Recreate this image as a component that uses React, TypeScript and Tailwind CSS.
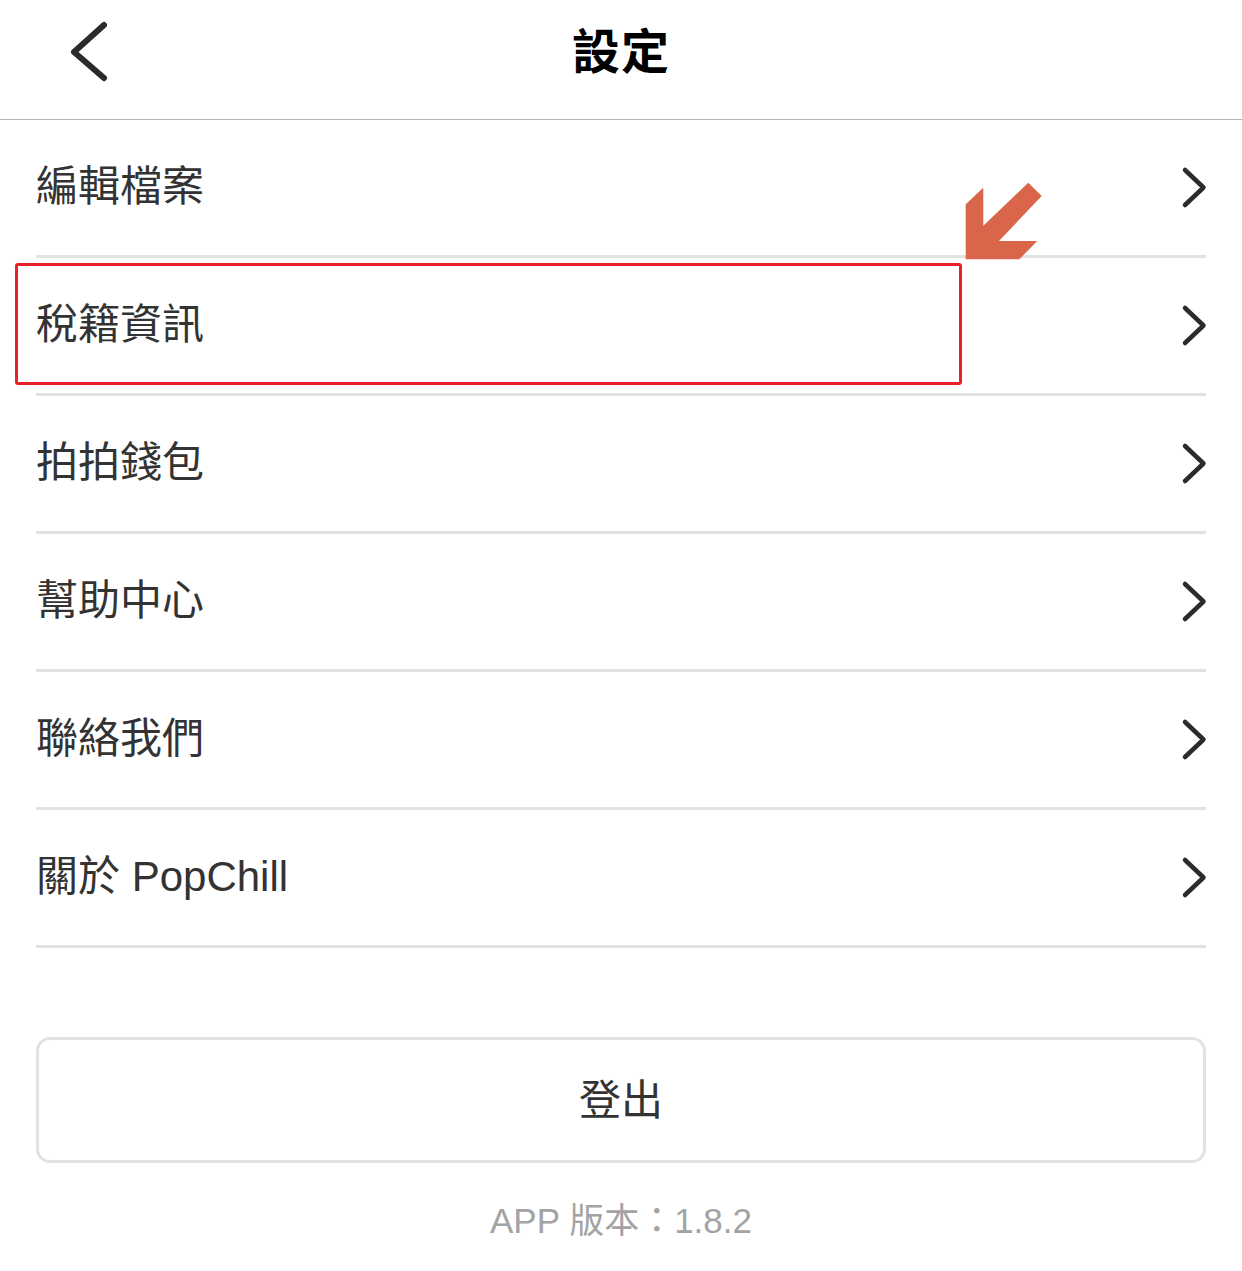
import React from "react";

const items = ["編輯檔案", "稅籍資訊", "拍拍錢包", "幫助中心", "聯絡我們", "關於 PopChill"];

function ChevronRight() {
  return (
    <svg width="28" height="44" viewBox="0 0 28 44" fill="none" overflow="visible">
      <path d="M7 4 L25.5 21.5 L7 39" stroke="#2b2b2b" strokeWidth="4.5" strokeLinecap="round" strokeLinejoin="round" />
    </svg>
  );
}

export default function App() {
  return (
    <div
      className="relative w-[1242px] min-h-[1271px] bg-white text-[#333333]"
      style={{ fontFamily: '"Liberation Sans", "Noto Sans CJK TC", sans-serif' }}
    >
      {/* Header */}
      <div className="relative h-[120px] border-b border-[#b5b5b5] flex items-center justify-center">
        <svg className="absolute left-[66px] top-[17px]" width="46" height="70" viewBox="0 0 46 70" fill="none">
          <path d="M38 8 L8 35 L38 61" stroke="#2b2b2b" strokeWidth="6" strokeLinecap="round" strokeLinejoin="round" />
        </svg>
        <h1 className="text-[48px] font-bold text-black leading-none -mt-[14px] tracking-[1px]">設定</h1>
      </div>

      {/* List */}
      <div className="px-[36px]">
        {items.map((label) => (
          <div key={label} className="h-[138px] flex items-center justify-between border-b-[3px] border-[#e2e2e2]">
            <span className="text-[42px] leading-none -mt-[2px]">{label}</span>
            <ChevronRight />
          </div>
        ))}
      </div>

      {/* Logout */}
      <div className="px-[36px] mt-[89px]">
        <button className="w-full h-[126px] border-[3px] border-[#e2e2e2] rounded-[14px] flex items-center justify-center text-[42px] text-[#333333]">
          登出
        </button>
      </div>
      <div className="mt-[38px] text-center text-[35px] leading-[40px] text-[#a3a3a3]">APP 版本：1.8.2</div>

      {/* Annotation: highlight box */}
      <div className="absolute left-[15px] top-[263px] w-[947px] h-[122px] border-[3px] border-[#e8202a] rounded-[3px]" />

      {/* Annotation: arrow */}
      <svg className="absolute left-[960px] top-[178px]" width="90" height="90" viewBox="960 178 90 90">
        <polygon
          points="965.7,259.3 965.7,204.3 983.3,187.7 983.3,225.7 1028.3,182.7 1041.7,196 999,241 1037.3,241 1019.3,259.3"
          fill="#d9654a"
        />
      </svg>
    </div>
  );
}
